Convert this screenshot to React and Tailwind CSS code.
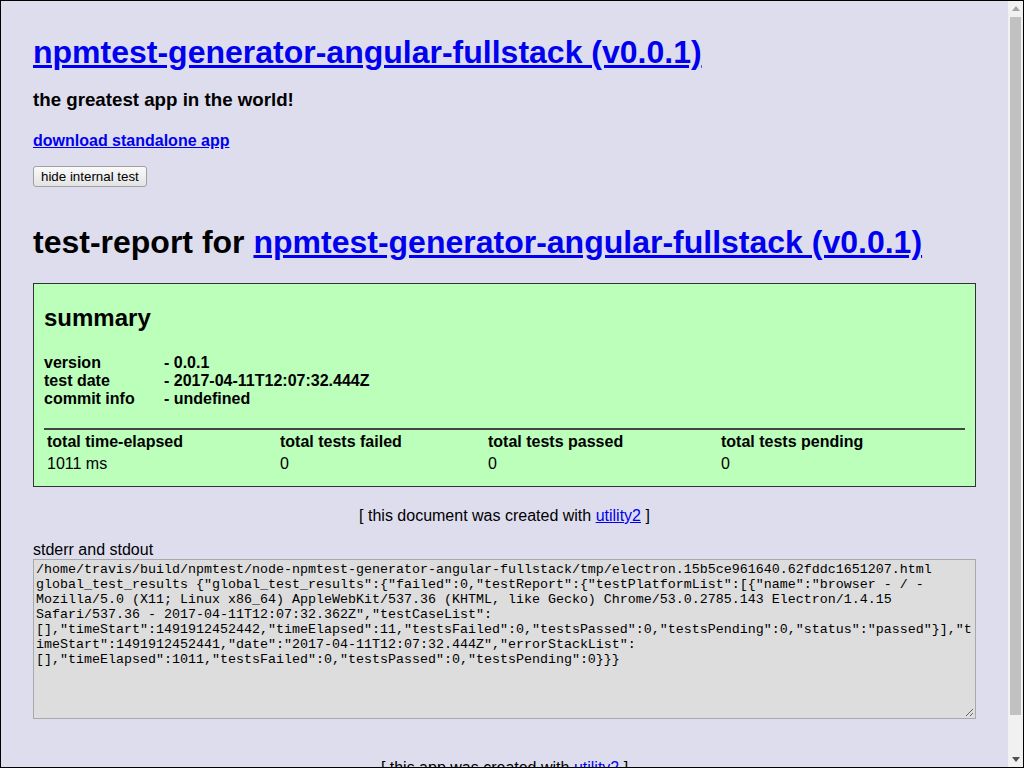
import React from "react";

const lines = [
  '/home/travis/build/npmtest/node-npmtest-generator-angular-fullstack/tmp/electron.15b5ce961640.62fddc1651207.html',
  'global_test_results {"global_test_results":{"failed":0,"testReport":{"testPlatformList":[{"name":"browser - / -',
  'Mozilla/5.0 (X11; Linux x86_64) AppleWebKit/537.36 (KHTML, like Gecko) Chrome/53.0.2785.143 Electron/1.4.15',
  'Safari/537.36 - 2017-04-11T12:07:32.362Z","testCaseList":',
  '[],"timeStart":1491912452442,"timeElapsed":11,"testsFailed":0,"testsPassed":0,"testsPending":0,"status":"passed"}],"t',
  'imeStart":1491912452441,"date":"2017-04-11T12:07:32.444Z","errorStackList":',
  '[],"timeElapsed":1011,"testsFailed":0,"testsPassed":0,"testsPending":0}}}',
];

export default function App() {
  return (
    <div
      className="w-[1024px] h-[768px] border border-black bg-[#ddddee] overflow-hidden flex text-black"
      style={{ fontFamily: '"Liberation Sans", Arial, sans-serif' }}
    >
      <div className="flex-1 overflow-hidden px-8 pt-[33px]">
        <h1 className="text-[32px] font-bold leading-[37px]">
          <a href="#" className="text-[#0000ee] underline">
            npmtest-generator-angular-fullstack (v0.0.1)
          </a>
        </h1>
        <h3 className="mt-[18px] text-[18.72px] font-bold leading-[22px]">
          the greatest app in the world!
        </h3>
        <div className="mt-[21px] text-[16px] font-bold leading-[18px]">
          <a href="#" className="text-[#0000ee] underline">
            download standalone app
          </a>
        </div>
        <div className="mt-[14px]">
          <button className="h-[21px] px-[7px] text-[13.33px] leading-[15px] rounded-[3px] border border-[#a0a0a0] bg-gradient-to-b from-[#fafafa] to-[#e3e3e3] text-black">
            hide internal test
          </button>
        </div>
        <h1 className="mt-[36px] text-[32px] font-bold leading-[37px]">
          test-report for{" "}
          <a href="#" className="text-[#0000ee] underline">
            npmtest-generator-angular-fullstack (v0.0.1)
          </a>
        </h1>
        <div className="mt-[22px] border border-[#333] bg-[#bbffbb] px-[10px] pt-[10px] pb-[11px]">
          <h2 className="mt-[10px] text-[24px] font-bold leading-[28px]">summary</h2>
          <div className="mt-[22px] text-[16px] font-bold leading-[18px]">
            <div className="flex">
              <span className="w-[120px]">version</span>
              <span>- 0.0.1</span>
            </div>
            <div className="flex">
              <span className="w-[120px]">test date</span>
              <span>- 2017-04-11T12:07:32.444Z</span>
            </div>
            <div className="flex">
              <span className="w-[120px]">commit info</span>
              <span>- undefined</span>
            </div>
          </div>
          <div className="mt-[20px] border-t-2 border-t-[#444] pt-[1px]">
            <div className="grid grid-cols-[233px_208px_233px_1fr] text-[16px] leading-[18px]">
              <div className="px-[3px] py-[2px] font-bold">total time-elapsed</div>
              <div className="px-[3px] py-[2px] font-bold">total tests failed</div>
              <div className="px-[3px] py-[2px] font-bold">total tests passed</div>
              <div className="px-[3px] py-[2px] font-bold">total tests pending</div>
              <div className="px-[3px] py-[2px]">1011 ms</div>
              <div className="px-[3px] py-[2px]">0</div>
              <div className="px-[3px] py-[2px]">0</div>
              <div className="px-[3px] py-[2px]">0</div>
            </div>
          </div>
        </div>
        <div className="mt-[20px] text-center text-[16px] leading-[18px]">
          [ this document was created with{" "}
          <a href="#" className="text-[#0000ee] underline">utility2</a> ]
        </div>
        <div className="mt-[16px] text-[16px] leading-[18px]">stderr and stdout</div>
        <div className="relative h-[160px] border border-[#a9a9a9] bg-[#dddddd] px-[2px] py-[2px] overflow-hidden">
          <div
            className="whitespace-pre text-[13.33px] leading-[15px] text-black"
            style={{ fontFamily: '"Liberation Mono", "Courier New", monospace' }}
          >
            {lines.join("\n")}
          </div>
          <svg className="absolute right-[1px] bottom-[1px]" width="10" height="10" viewBox="0 0 10 10">
            <line x1="9" y1="2" x2="2" y2="9" stroke="#666" strokeWidth="1" />
            <line x1="9" y1="6" x2="6" y2="9" stroke="#666" strokeWidth="1" />
          </svg>
        </div>
        <div className="mt-[40px] text-center text-[16px] leading-[18px]">
          [ this app was created with{" "}
          <a href="#" className="text-[#0000ee] underline">utility2</a> ]
        </div>
      </div>
      <div className="w-[15px] h-full bg-[#f1f1f1] flex flex-col items-center">
        <div className="h-[15px] w-full flex items-center justify-center">
          <svg width="8" height="5" viewBox="0 0 8 5">
            <polygon points="0,5 8,5 4,0" fill="#a3a3a3" />
          </svg>
        </div>
        <div className="mt-[1px] w-[11px] h-[698px] bg-[#c1c1c1]" />
        <div className="flex-1" />
        <div className="h-[15px] w-full flex items-center justify-center">
          <svg width="8" height="5" viewBox="0 0 8 5">
            <polygon points="0,0 8,0 4,5" fill="#505050" />
          </svg>
        </div>
      </div>
    </div>
  );
}
